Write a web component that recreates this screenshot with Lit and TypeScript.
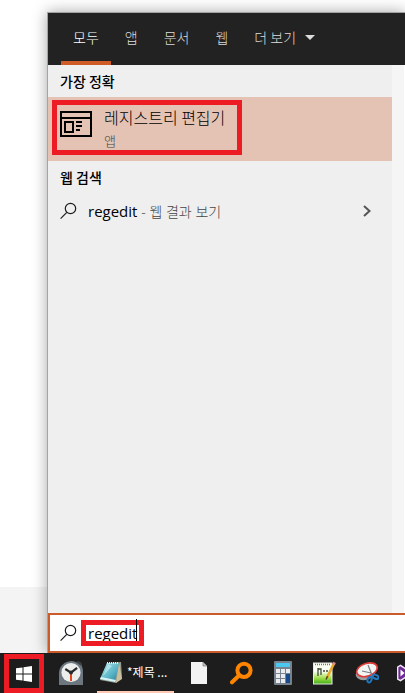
import { LitElement, html, css, svg } from "lit";
import { customElement, property } from "lit/decorators.js";

const loupe = html`<svg class="loupe" viewBox="0 0 18 18" width="18" height="18" aria-hidden="true">
  <g fill="none" stroke="#1c1c1c" stroke-width="1.2">
    <circle cx="10.5" cy="6.5" r="5.2" />
    <path d="M6.8 10.3L0.6 16.6" />
  </g>
</svg>`;

const icons = {
  clock: svg`
    <path d="M0 24V12A12 12 0 0 1 17 1.2C20 -0.2 23.5 2 23 5.5C24 8 24 9 24 12V24Z" fill="#6d7780" />
    <path d="M17 1.2C20 -0.8 23.6 1.6 22.8 5.2Z" fill="#3c4146" />
    <circle cx="12" cy="11.5" r="9.6" fill="#eceded" />
    <path d="M12 12V20" stroke="#e0481e" stroke-width="2" />
    <path d="M6.3 8L12 11.6L18.1 6.8" fill="none" stroke="#26292c" stroke-width="2.2" />
    <circle cx="12" cy="11.6" r="2" fill="#26292c" />`,
  notepad: svg`
    <path d="M8 3L22 2L23 18L17 23L1 20Z" fill="#9a9a8c" />
    <path d="M20 3L23 19L17 23Z" fill="#c9c0a0" />
    <path d="M8 3L20 3L16 22L1 19Z" fill="url(#pad)" />
    <path d="M1 19L16 22L17 20L2 17Z" fill="#d8f2f5" />
    <path d="M8 3L20 3" stroke="#e6eef0" stroke-width="2" stroke-dasharray="1 1" />
    <path d="M9 4L4 16L13 6Z" fill="#c9f4f8" opacity=".6" />
    <defs><linearGradient id="pad" x1="0" y1="0" x2="1" y2="1">
      <stop offset="0" stop-color="#b5e4e8" /><stop offset=".6" stop-color="#56b4c6" /><stop offset="1" stop-color="#23798f" />
    </linearGradient></defs>`,
  page: svg`
    <path d="M4 1H16L20 5V23H4Z" fill="#f3f3f3" />
    <path d="M16 1V5H20Z" fill="#c4c4c4" stroke="#777" stroke-width=".7" />`,
  search: svg`
    <circle cx="15" cy="9.3" r="6.6" fill="none" stroke="#ff8400" stroke-width="4" />
    <path d="M10 14.5L3 21.3" stroke="#ff8400" stroke-width="4" stroke-linecap="round" />`,
  calc: svg`
    <rect x="3" y="0" width="18" height="24" rx="1" fill="#77828d" />
    <rect x="5" y="2" width="14" height="4" fill="#4cc8f0" />
    <g fill="#e9ebee">
      <rect x="5" y="8" width="4" height="4" /><rect x="10" y="8" width="4" height="4" /><rect x="15" y="8" width="4" height="4" />
      <rect x="5" y="13" width="4" height="4" /><rect x="10" y="13" width="4" height="4" />
      <rect x="5" y="18" width="4" height="4" /><rect x="10" y="18" width="4" height="4" />
    </g>
    <rect x="15" y="13" width="4" height="9" fill="#164a8c" />`,
  editor: svg`
    <defs><linearGradient id="leaf" x1="0" y1="0" x2="0" y2="1">
      <stop offset=".4" stop-color="#fbfff4" /><stop offset=".7" stop-color="#a6e053" /><stop offset="1" stop-color="#3fae10" />
    </linearGradient></defs>
    <rect x="0.5" y="2" width="18.5" height="21" fill="url(#leaf)" stroke="#e8ebe4" />
    <path d="M2 3.5H18" stroke="#777" stroke-width="1.5" stroke-dasharray="1 1" />
    <path d="M5 15V7M5 8H8V14M10 10H12M13 10H15" fill="none" stroke="#3b4a35" stroke-width="1.3" />
    <path d="M21 2.5L14 16.5" stroke="#e7a927" stroke-width="2.6" />
    <path d="M21.6 1.3L20.5 3.6" stroke="#e08a8a" stroke-width="2.8" />
    <path d="M14.6 15.3L13 18.5" stroke="#4c3a20" stroke-width="1.4" />`,
  snip: svg`
    <ellipse cx="10.5" cy="12" rx="10" ry="6.8" transform="rotate(-18 10.5 12)" fill="#9c9fa2" />
    <ellipse cx="12" cy="8.8" rx="10.6" ry="6.4" transform="rotate(-18 12 8.8)" fill="#f3f4f4" stroke="#dc3a34" stroke-width="1.7" />
    <path d="M7 10L16 12M13 4L17 14" stroke="#777d82" stroke-width="1.2" />
    <g fill="none" stroke="#2277bd" stroke-width="2">
      <ellipse cx="14.6" cy="18.6" rx="1.9" ry="3" transform="rotate(25 14.6 18.6)" />
      <ellipse cx="20.6" cy="15.8" rx="3" ry="1.9" transform="rotate(25 20.6 15.8)" />
    </g>`,
  studio: svg`
    <path d="M0.7 6L3.5 4.4L11 9.5L20 1.5L23.4 4V20L20 22L11 14.5L3.5 19.6L0.7 18Z" fill="#6f2a94" stroke="#f2e8f7" stroke-width="1.4" />
    <path d="M3.5 8.5V15.5L7.5 12Z" fill="#fff" />`,
};

@customElement("task-icon")
class TaskIcon extends LitElement {
  @property() name: keyof typeof icons = "page";
  @property() label = "";
  static styles = css`
    :host { display: flex; flex: none; width: 42px; }
    button { flex: 1; display: flex; align-items: center; justify-content: center; padding: 0; border: 0; background: none; }
    svg { display: block; flex: none; }
  `;
  render() {
    return html`<button aria-label=${this.label}>
      <svg viewBox="0 0 24 24" width="24" height="24" aria-hidden="true">${icons[this.name]}</svg>
    </button>`;
  }
}

@customElement("app-root")
class AppRoot extends LitElement {
  static styles = css`
    :host {
      display: flex; flex-direction: column; min-height: 100vh; overflow: hidden;
      font-family: "Open Sans", "Noto Sans CJK KR", sans-serif; font-size: 14px; line-height: 20px; color: #111;
    }
    * { box-sizing: border-box; }
    button, input { font: inherit; color: inherit; border: 0; padding: 0; background: none; }
    svg { display: block; flex: none; }
    .ko { font-family: "Noto Sans CJK KR", sans-serif; }

    .desktop {
      flex: 1; display: flex; padding: 12px 0 0 47px; overflow: hidden;
      background: linear-gradient(#f4f4f4, #f4f4f4) bottom / 100% 66px no-repeat #fff;
    }
    .panel {
      flex: 1; min-width: 0; display: flex; flex-direction: column;
      border: solid #a3a3a3; border-width: 1px 0 0 1px; background: #efefef;
      box-shadow: 0 0 14px rgba(0, 0, 0, 0.35);
    }
    .tabs { display: flex; gap: 2px; height: 52px; padding-left: 13px; background: #222; color: #ddd; }
    .tab { display: flex; align-items: center; gap: 9px; padding: 0 12px; border-bottom: 4px solid transparent; font-weight: 300; white-space: nowrap; }
    .tab.on { color: #fff; border-color: #cf5b28; }
    .arrow { border: 5px solid transparent; border-top-color: #ddd; border-bottom: 0; }

    .body { flex: 1; display: flex; }
    .results { flex: 1; min-width: 0; }
    .rail { width: 13px; background: #f5f5f5; border-right: 1px solid #fff; }
    h2 { margin: 0; padding: 0 12px; height: 32px; font-size: 14px; line-height: 32px; font-weight: 500; color: #000; }
    .best { display: flex; width: 100%; height: 64px; padding: 3px 4px; background: #e5c3b4; text-align: left; }
    .mark { border: 5px solid #ed1c24; }
    .hit { display: flex; gap: 12px; width: 190px; height: 55px; padding: 0 3px; }
    .hit svg { margin-top: 6px; }
    .name { display: block; font-size: 16px; line-height: 24px; font-weight: 300; color: #000; }
    .kind { display: block; font-size: 13px; line-height: 24px; font-weight: 300; color: #444; }
    .web { display: flex; align-items: center; width: 100%; height: 36px; padding: 0 20px 0 12px; text-align: left; }
    .web .text { flex: 1; margin-left: 10px; font-size: 15px; color: #000; }
    .web .hint { font-size: 14px; font-weight: 300; color: #444; }

    .search { display: flex; align-items: center; height: 40px; padding-left: 10px; border: 2px solid #cb5b2b; border-right: 0; background: #fff; }
    .field { position: relative; display: flex; width: 63px; height: 26px; margin-left: 3px; }
    .field input { width: 53px; height: 16px; padding: 0 0 0 2px; font-size: 15px; line-height: 16px; outline: 0; color: #000; }
    .caret { position: absolute; right: 2px; top: -6px; width: 1px; height: 22px; background: #000; }

    .taskbar { display: flex; height: 40px; background: #1d1d1d; color: #fff; overflow: hidden; }
    .start { flex: none; display: flex; align-items: center; justify-content: center; width: 40px; margin: 1px 4px 0; }
    .clock { width: 46px; }
    .open { flex: none; display: flex; align-items: center; gap: 4px; width: 77px; margin: 0 4px 0 3px; padding: 0 2px; border-bottom: 2px solid #ffc9b3; font-size: 12px; white-space: nowrap; }
  `;

  render() {
    const tabs = ["모두", "앱", "문서", "웹", "더 보기"];
    return html`
      <main class="desktop">
        <section class="panel">
          <nav class="tabs ko">
            ${tabs.map((t, i) => html`<button class="tab ${i === 0 ? "on" : ""}">${t}${i === 4 ? html`<span class="arrow"></span>` : ""}</button>`)}
          </nav>
          <div class="body">
            <div class="results">
              <h2 class="ko">가장 정확</h2>
              <button class="best ko">
                <span class="hit mark">
                  <svg viewBox="0 0 32 26" width="32" height="26" aria-hidden="true">
                    <g fill="none" stroke="#000" stroke-width="2">
                      <rect x="1" y="1" width="30" height="24" />
                      <path d="M1 7H31M16 11H22M16 15H22M16 19H20" />
                      <rect x="5" y="11" width="8" height="10" />
                    </g>
                  </svg>
                  <span><span class="name">레지스트리 편집기</span><span class="kind">앱</span></span>
                </span>
              </button>
              <h2 class="ko">웹 검색</h2>
              <button class="web">
                ${loupe}
                <span class="text">regedit <span class="hint">- 웹 결과 보기</span></span>
                <svg viewBox="0 0 10 12" width="10" height="12" aria-hidden="true"><path d="M2 1L7.5 6L2 11" fill="none" stroke="#555" stroke-width="2" /></svg>
              </button>
            </div>
            <div class="rail"></div>
          </div>
          <div class="search">
            ${loupe}
            <div class="field mark">
              <input type="text" aria-label="검색" value="regedit" spellcheck="false" />
              <span class="caret"></span>
            </div>
          </div>
        </section>
      </main>
      <footer class="taskbar">
        <button class="start mark" aria-label="시작">
          <svg viewBox="0 0 16 16" width="16" height="16" aria-hidden="true">
            <path d="M0 2.3L6.5 1.4V7.5H0ZM7.5 1.2L16 0V7.5H7.5ZM0 8.5H6.5V14.6L0 13.7ZM7.5 8.5H16V16L7.5 14.8Z" fill="#fff" />
          </svg>
        </button>
        <task-icon class="clock" name="clock" label="시계"></task-icon>
        <button class="open ko">
          <svg viewBox="0 0 24 24" width="24" height="24" aria-hidden="true">${icons.notepad}</svg>
          <span>*제목 ...</span>
        </button>
        <task-icon name="page" label="문서"></task-icon>
        <task-icon name="search" label="검색"></task-icon>
        <task-icon name="calc" label="계산기"></task-icon>
        <task-icon name="editor" label="편집기"></task-icon>
        <task-icon name="snip" label="캡처"></task-icon>
        <task-icon name="studio" label="개발"></task-icon>
      </footer>
    `;
  }
}
